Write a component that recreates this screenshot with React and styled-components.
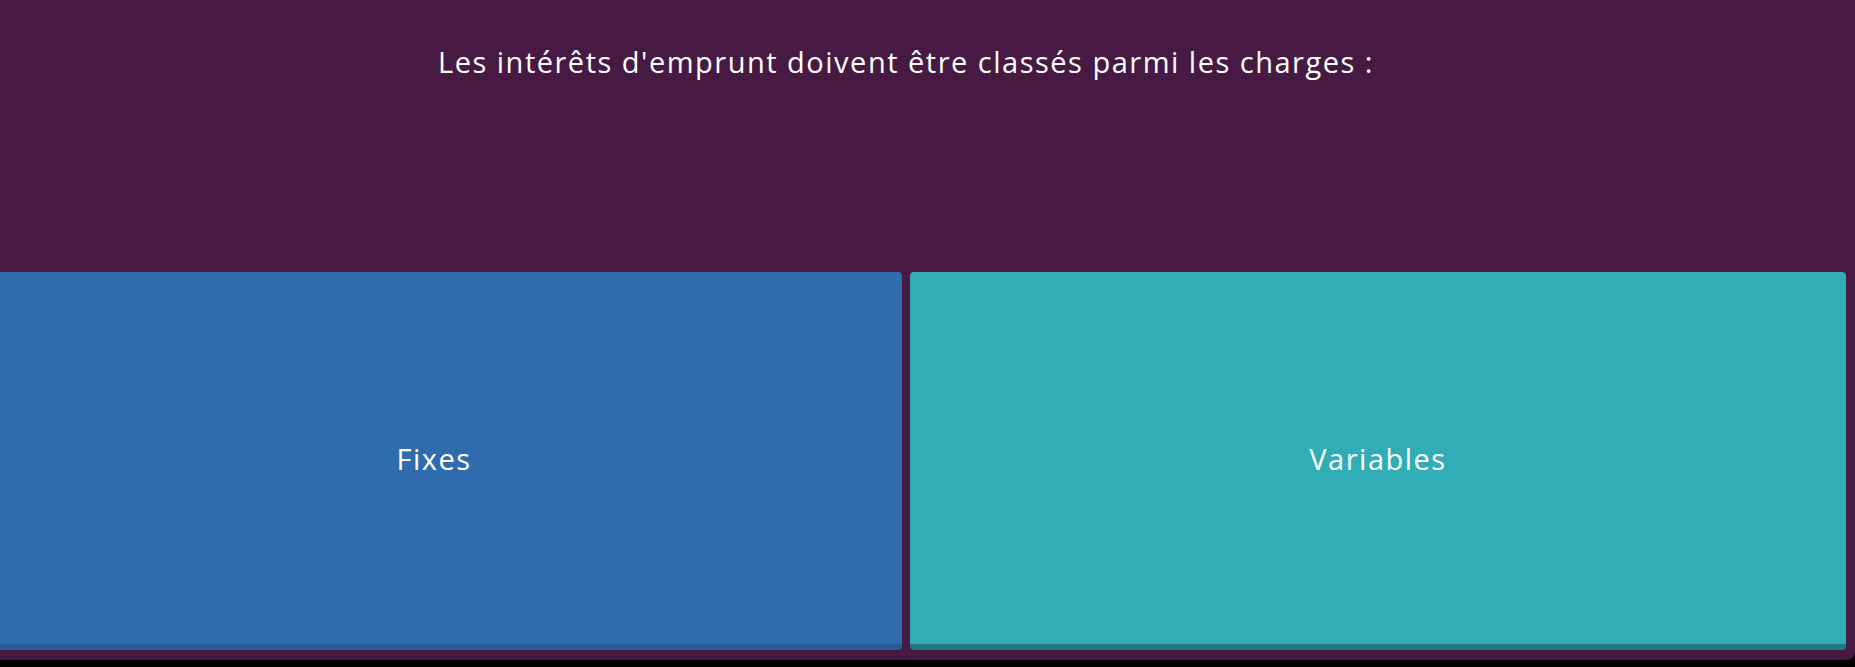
import React from 'react'
import styled, { createGlobalStyle } from 'styled-components'

const GlobalStyle = createGlobalStyle`
  html, body {
    margin: 0;
    padding: 0;
    background: #000000;
    overflow: hidden;
  }

  body {
    font-family: "Open Sans", Lato, sans-serif;
  }
`

const Stage = styled.div`
  width: 1855px;
  height: 667px;
  overflow: hidden;
`

const Panel = styled.section`
  display: flex;
  flex-direction: column;
  box-sizing: border-box;
  width: 1897px;
  height: 660px;
  margin-left: -42px;
  padding: 0 9px 10px 8px;

  background: #471a44;
  border-radius: 0 0 8px 0;
`

const Question = styled.h1`
  flex: 0 0 272px;
  margin: 0;
  padding-top: 45px;
  box-sizing: border-box;

  font-size: 29px;
  font-weight: 400;
  line-height: 1.2;
  letter-spacing: 1.5px;
  text-align: center;
  color: #ffffff;
`

const Answers = styled.div`
  flex: 1;
  display: grid;
  grid-template-columns: 1fr 1fr;
  gap: 8px;
`

const Answer = styled.button`
  display: flex;
  align-items: center;
  justify-content: center;

  margin: 0;
  padding: 0;
  border: none;
  border-bottom: 6px solid ${props => props.shade};
  border-radius: 4px;
  background: ${props => props.color};

  font-family: inherit;
  font-size: 29px;
  font-weight: 400;
  letter-spacing: 1.5px;
  color: #ffffff;
  cursor: pointer;
`

const answers = [
  { label: 'Fixes', color: '#2f6dae', shade: '#285c92' },
  { label: 'Variables', color: '#31adb8', shade: '#23797e' },
]

export default function App() {
  return (
    <Stage>
      <GlobalStyle />
      <Panel>
        <Question>Les intérêts d'emprunt doivent être classés parmi les charges :</Question>
        <Answers>
          {answers.map(answer => (
            <Answer key={answer.label} color={answer.color} shade={answer.shade}>
              {answer.label}
            </Answer>
          ))}
        </Answers>
      </Panel>
    </Stage>
  )
}
